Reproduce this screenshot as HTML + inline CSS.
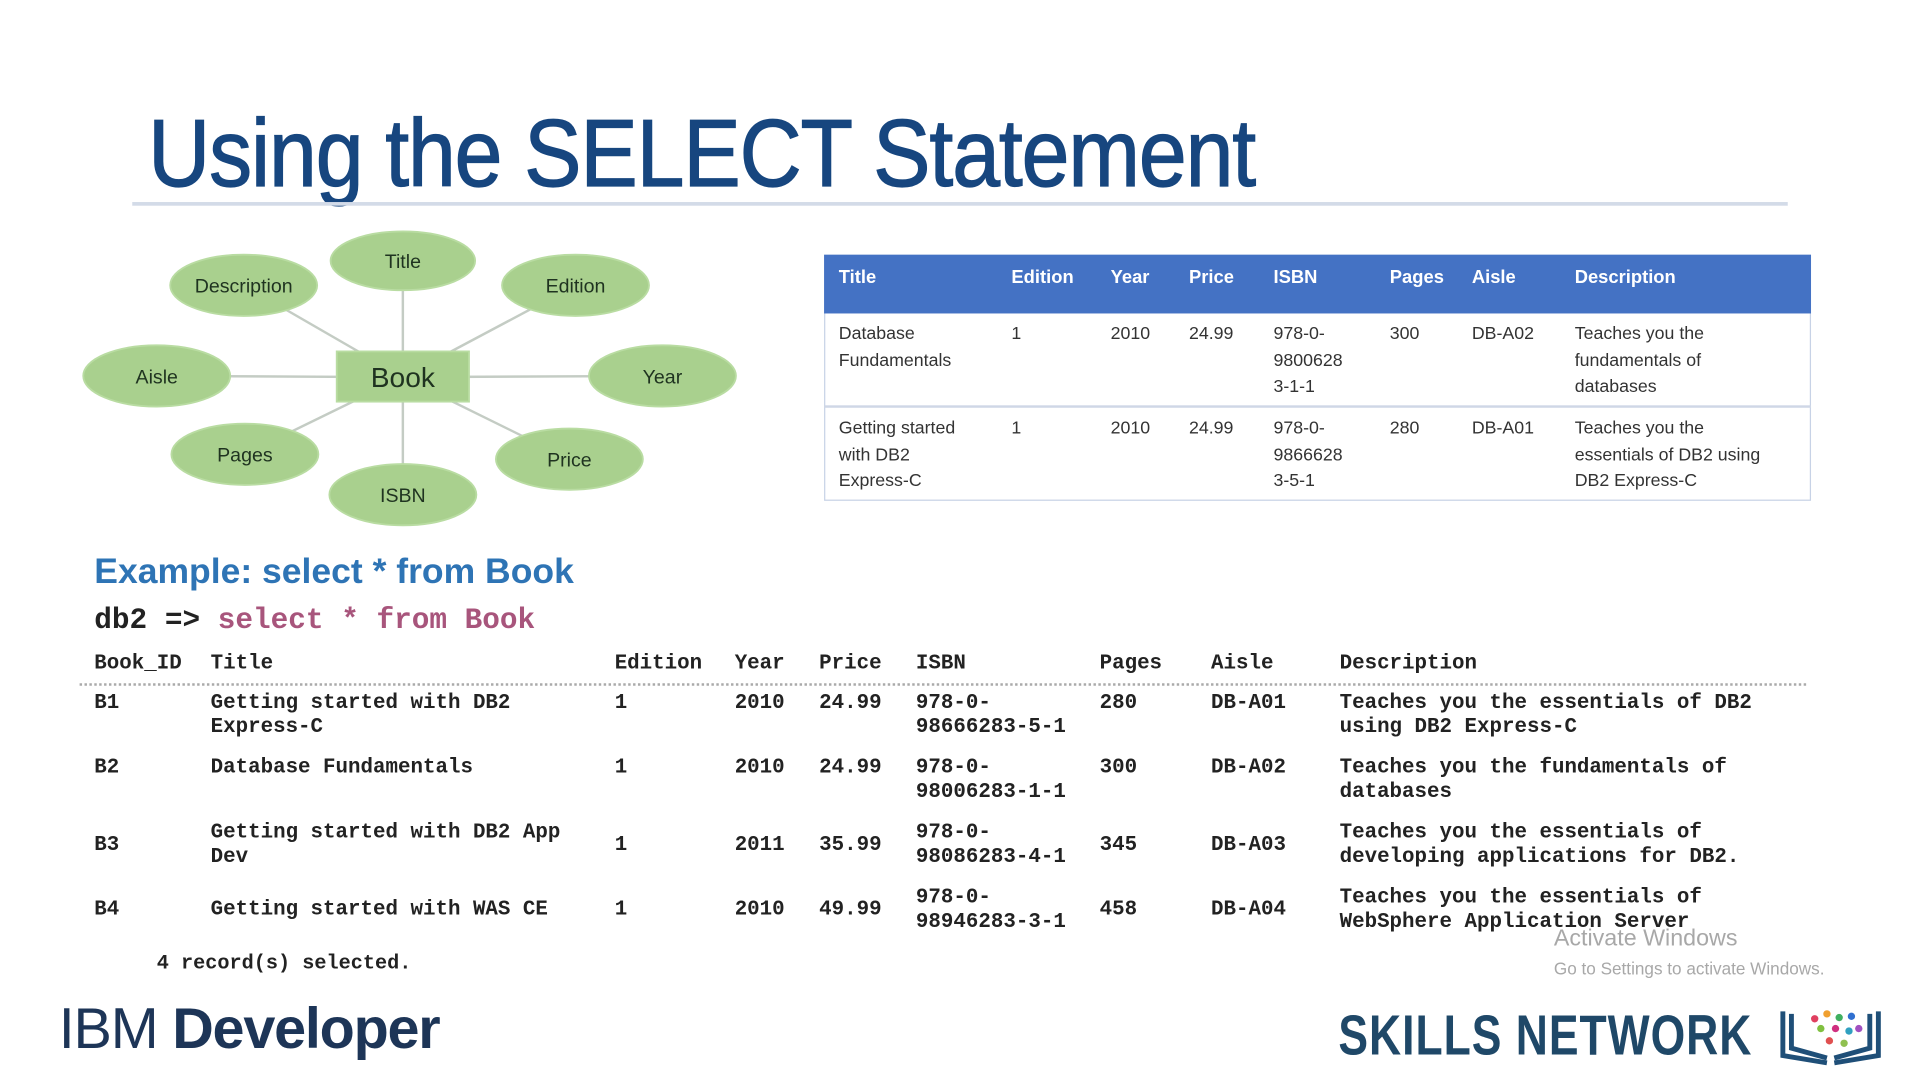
<!DOCTYPE html>
<html><head><meta charset="utf-8"><style>
html,body{margin:0;padding:0;background:#fff;overflow:hidden;width:1920px;height:1080px}
#w{position:absolute;left:0;top:0;width:1568px;height:882px;transform:scale(1.22449);transform-origin:0 0;font-family:"Liberation Sans",sans-serif}
.a{position:absolute;white-space:nowrap}
.m{font-family:"Liberation Mono",monospace;font-weight:bold;font-size:17px;color:#222;line-height:20px}
.t{font-size:14.5px;color:#333;line-height:21.5px}
.h{font-size:15px;color:#fff;font-weight:bold}
</style></head><body><div id="w">
<div class="a" style="left:121px;top:80px;font-size:78px;color:#17467f;transform:scaleX(0.9);transform-origin:0 0;letter-spacing:-1px;-webkit-text-stroke:1px #17467f">Using the SELECT Statement</div>
<div class="a" style="left:108px;top:165px;width:1352px;height:3px;background:#d3dbe8"></div>

<svg class="a" style="left:0;top:0" width="640" height="440">
<g stroke="#c4ccc4" stroke-width="2">
<line x1="329" y1="308" x2="329" y2="213"/><line x1="329" y1="308" x2="199" y2="233"/><line x1="329" y1="308" x2="470" y2="233"/>
<line x1="329" y1="308" x2="128" y2="307"/><line x1="329" y1="308" x2="541" y2="307"/><line x1="329" y1="308" x2="200" y2="371"/>
<line x1="329" y1="308" x2="465" y2="375"/><line x1="329" y1="308" x2="329" y2="404"/></g>
<g fill="#a9d08e" stroke="#b9dca2" stroke-width="1.5">
<ellipse cx="329" cy="213" rx="59" ry="24"/><ellipse cx="199" cy="233" rx="60" ry="25"/><ellipse cx="470" cy="233" rx="60" ry="25"/>
<ellipse cx="128" cy="307" rx="60" ry="25"/><ellipse cx="541" cy="307" rx="60" ry="25"/><ellipse cx="200" cy="371" rx="60" ry="25"/>
<ellipse cx="465" cy="375" rx="60" ry="25"/><ellipse cx="329" cy="404" rx="60" ry="25"/>
<rect x="275" y="287" width="108" height="41"/></g>
<g font-family="Liberation Sans" font-size="16" fill="#1f3320" text-anchor="middle">
<text x="329" y="219">Title</text><text x="199" y="239">Description</text><text x="470" y="239">Edition</text>
<text x="128" y="313">Aisle</text><text x="541" y="313">Year</text><text x="200" y="377">Pages</text>
<text x="465" y="381">Price</text><text x="329" y="410">ISBN</text>
<text x="329" y="316" font-size="23">Book</text></g>
</svg>

<div class="a" style="left:673px;top:208px;width:806px;height:201px;border:1px solid #c7d2e6;box-sizing:border-box"></div>
<div class="a" style="left:673px;top:208px;width:806px;height:48px;background:#4472c4"></div>
<div class="a" style="left:673px;top:331px;width:806px;height:2px;background:#cfd7e6"></div>
<div class="a h" style="left:685px;top:218px">Title</div><div class="a h" style="left:826px;top:218px">Edition</div>
<div class="a h" style="left:907px;top:218px">Year</div><div class="a h" style="left:971px;top:218px">Price</div>
<div class="a h" style="left:1040px;top:218px">ISBN</div><div class="a h" style="left:1135px;top:218px">Pages</div>
<div class="a h" style="left:1202px;top:218px">Aisle</div><div class="a h" style="left:1286px;top:218px">Description</div>
<div class="a t" style="left:685px;top:263px">Database<br>Fundamentals</div><div class="a t" style="left:826px;top:263px">1</div>
<div class="a t" style="left:907px;top:263px">2010</div><div class="a t" style="left:971px;top:263px">24.99</div>
<div class="a t" style="left:1040px;top:263px">978-0-<br>9800628<br>3-1-1</div><div class="a t" style="left:1135px;top:263px">300</div>
<div class="a t" style="left:1202px;top:263px">DB-A02</div><div class="a t" style="left:1286px;top:263px">Teaches you the<br>fundamentals of<br>databases</div>
<div class="a t" style="left:685px;top:340px">Getting started<br>with DB2<br>Express-C</div><div class="a t" style="left:826px;top:340px">1</div>
<div class="a t" style="left:907px;top:340px">2010</div><div class="a t" style="left:971px;top:340px">24.99</div>
<div class="a t" style="left:1040px;top:340px">978-0-<br>9866628<br>3-5-1</div><div class="a t" style="left:1135px;top:340px">280</div>
<div class="a t" style="left:1202px;top:340px">DB-A01</div><div class="a t" style="left:1286px;top:340px">Teaches you the<br>essentials of DB2 using<br>DB2 Express-C</div>

<div class="a" style="left:77px;top:451px;font-size:29px;color:#2e74b5;font-weight:bold">Example: select * from Book</div>
<div class="a" style="left:77px;top:494px;font-family:'Liberation Mono',monospace;font-weight:bold;font-size:24px;color:#222">db2 =&gt; <span style="color:#a8557c">select * from Book</span></div>

<div class="a m" style="left:77px;top:533px">Book_ID</div><div class="a m" style="left:172px;top:533px">Title</div>
<div class="a m" style="left:502px;top:533px">Edition</div><div class="a m" style="left:600px;top:533px">Year</div>
<div class="a m" style="left:669px;top:533px">Price</div><div class="a m" style="left:748px;top:533px">ISBN</div>
<div class="a m" style="left:898px;top:533px">Pages</div><div class="a m" style="left:989px;top:533px">Aisle</div>
<div class="a m" style="left:1094px;top:533px">Description</div>
<div class="a" style="left:65px;top:558px;width:1410px;border-top:2px dotted #aaa"></div>

<div class="a m" style="left:77px;top:565px">B1</div><div class="a m" style="left:172px;top:565px">Getting started with DB2<br>Express-C</div>
<div class="a m" style="left:502px;top:565px">1</div><div class="a m" style="left:600px;top:565px">2010</div><div class="a m" style="left:669px;top:565px">24.99</div>
<div class="a m" style="left:748px;top:565px">978-0-<br>98666283-5-1</div><div class="a m" style="left:898px;top:565px">280</div>
<div class="a m" style="left:989px;top:565px">DB-A01</div><div class="a m" style="left:1094px;top:565px">Teaches you the essentials of DB2<br>using DB2 Express-C</div>

<div class="a m" style="left:77px;top:618px">B2</div><div class="a m" style="left:172px;top:618px">Database Fundamentals</div>
<div class="a m" style="left:502px;top:618px">1</div><div class="a m" style="left:600px;top:618px">2010</div><div class="a m" style="left:669px;top:618px">24.99</div>
<div class="a m" style="left:748px;top:618px">978-0-<br>98006283-1-1</div><div class="a m" style="left:898px;top:618px">300</div>
<div class="a m" style="left:989px;top:618px">DB-A02</div><div class="a m" style="left:1094px;top:618px">Teaches you the fundamentals of<br>databases</div>

<div class="a m" style="left:77px;top:681px">B3</div><div class="a m" style="left:172px;top:671px">Getting started with DB2 App<br>Dev</div>
<div class="a m" style="left:502px;top:681px">1</div><div class="a m" style="left:600px;top:681px">2011</div><div class="a m" style="left:669px;top:681px">35.99</div>
<div class="a m" style="left:748px;top:671px">978-0-<br>98086283-4-1</div><div class="a m" style="left:898px;top:681px">345</div>
<div class="a m" style="left:989px;top:681px">DB-A03</div><div class="a m" style="left:1094px;top:671px">Teaches you the essentials of<br>developing applications for DB2.</div>

<div class="a m" style="left:77px;top:734px">B4</div><div class="a m" style="left:172px;top:734px">Getting started with WAS CE</div>
<div class="a m" style="left:502px;top:734px">1</div><div class="a m" style="left:600px;top:734px">2010</div><div class="a m" style="left:669px;top:734px">49.99</div>
<div class="a m" style="left:748px;top:724px">978-0-<br>98946283-3-1</div><div class="a m" style="left:898px;top:734px">458</div>
<div class="a m" style="left:989px;top:734px">DB-A04</div><div class="a m" style="left:1094px;top:724px">Teaches you the essentials of<br>WebSphere Application Server</div>
<div class="a m" style="left:128px;top:777px;font-size:16.5px">4 record(s) selected.</div>

<div class="a" style="left:1269px;top:756px;font-size:19px;color:#a8a8a8">Activate Windows</div>
<div class="a" style="left:1269px;top:783px;font-size:14px;color:#a8a8a8">Go to Settings to activate Windows.</div>

<div class="a" style="left:48px;top:812px;font-size:47px;color:#1d3557;letter-spacing:-1px">IBM <b>Developer</b></div>
<div class="a" style="left:1093px;top:818px;font-size:46px;font-weight:bold;color:#1f4868;transform:scaleX(0.79);transform-origin:0 0;letter-spacing:1px">SKILLS NETWORK</div>
<svg class="a" style="left:1452px;top:818px" width="90" height="54">
<g fill="none" stroke="#1f4f78" stroke-width="4"><path d="M4 8 V44 L40 50"/><path d="M11 10 V38 L40 46"/><path d="M82 8 V44 L46 50"/><path d="M75 10 V38 L46 46"/></g>
<g><circle cx="30" cy="14" r="3" fill="#e04060"/><circle cx="40" cy="10" r="3" fill="#f0a030"/><circle cx="50" cy="13" r="3" fill="#40b060"/><circle cx="60" cy="12" r="3" fill="#3070d0"/><circle cx="35" cy="22" r="3" fill="#80c040"/><circle cx="47" cy="22" r="3" fill="#d03080"/><circle cx="58" cy="24" r="3" fill="#30a0c0"/><circle cx="42" cy="32" r="3" fill="#e05050"/><circle cx="54" cy="34" r="3" fill="#90c050"/><circle cx="66" cy="22" r="3" fill="#a050c0"/></g>
</svg>
</div></body></html>
